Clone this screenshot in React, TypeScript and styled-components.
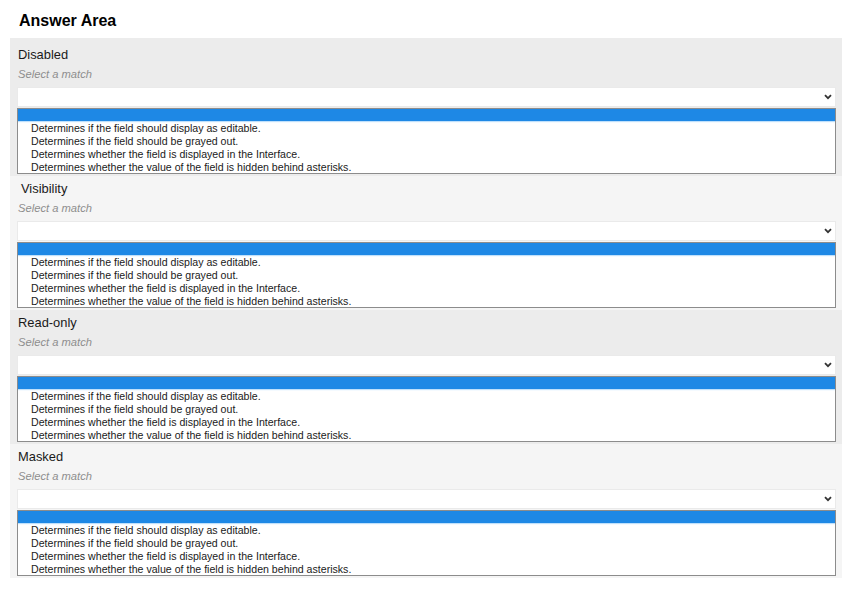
import React from "react";
import styled, { createGlobalStyle } from "styled-components";

const GlobalStyle = createGlobalStyle`
  body {
    margin: 0;
    background: #ffffff;
    font-family: "Liberation Sans", Arial, sans-serif;
    color: #1a1a1a;
  }
`;

const fields = ["Disabled", "Visibility", "Read-only", "Masked"];

const choices = [
  "Determines if the field should display as editable.",
  "Determines if the field should be grayed out.",
  "Determines whether the field is displayed in the Interface.",
  "Determines whether the value of the field is hidden behind asterisks.",
];

const Chevron = () => (
  <svg width="8" height="6" viewBox="0 0 8 6">
    <path d="M1 1.2 L4 4.2 L7 1.2" fill="none" stroke="#333" strokeWidth="1.8" />
  </svg>
);

const App = () => {
  return (
    <Page>
      <GlobalStyle />
      <Title>Answer Area</Title>
      <Sections>
        {fields.map((name, i) => (
          <Section key={name} $shade={i % 2 === 0}>
            <Label $indent={name === "Visibility"}>{name}</Label>
            <Hint>Select a match</Hint>
            <SelectBox>
              <Chevron />
            </SelectBox>
            <ListBox>
              <Highlight />
              <Options>
                {choices.map((c) => (
                  <Option key={c}>{c}</Option>
                ))}
              </Options>
            </ListBox>
          </Section>
        ))}
      </Sections>
    </Page>
  );
};

const Page = styled.div`
  width: 854px;
  height: 595px;
  padding: 0 12px 0 10px;
  box-sizing: border-box;
`;

const Title = styled.h1`
  margin: 0;
  padding: 12px 0 0 9px;
  height: 38px;
  box-sizing: border-box;
  font-size: 16px;
  line-height: 18px;
  font-weight: bold;
  color: #000;
`;

const Sections = styled.div`
  display: flex;
  flex-direction: column;
`;

const Section = styled.div<{ $shade: boolean }>`
  background: ${({ $shade }) => ($shade ? "#ececec" : "#f5f5f5")};
  padding: 5px 6px 2px 7px;
  &:first-child {
    padding-top: 9px;
  }
`;

const Label = styled.div<{ $indent?: boolean }>`
  font-size: 12.9px;
  line-height: 16px;
  padding-left: ${({ $indent }) => ($indent ? "4px" : "1px")};
  color: #1a1a1a;
`;

const Hint = styled.div`
  margin-top: 4px;
  padding-left: 1px;
  font-size: 11.2px;
  line-height: 14px;
  font-style: italic;
  color: #8e8e8e;
`;

const SelectBox = styled.div`
  margin-top: 6px;
  height: 20px;
  background: #ffffff;
  border: 1px solid #eaeaea;
  box-sizing: border-box;
  display: flex;
  align-items: center;
  justify-content: flex-end;
  padding-right: 3px;
`;

const ListBox = styled.div`
  margin-top: 1px;
  height: 66px;
  box-sizing: border-box;
  background: #ffffff;
  border: 1px solid #8c8c8c;
  overflow: hidden;
`;

const Highlight = styled.div`
  height: 12px;
  background: #1e88e5;
  box-shadow: 0 1px 1px #bfe0fb;
`;

const Options = styled.div`
  padding: 1px 0 0 13px;
`;

const Option = styled.div`
  font-size: 10.6px;
  line-height: 13px;
  color: #1a1a1a;
  white-space: nowrap;
`;

export default App;
